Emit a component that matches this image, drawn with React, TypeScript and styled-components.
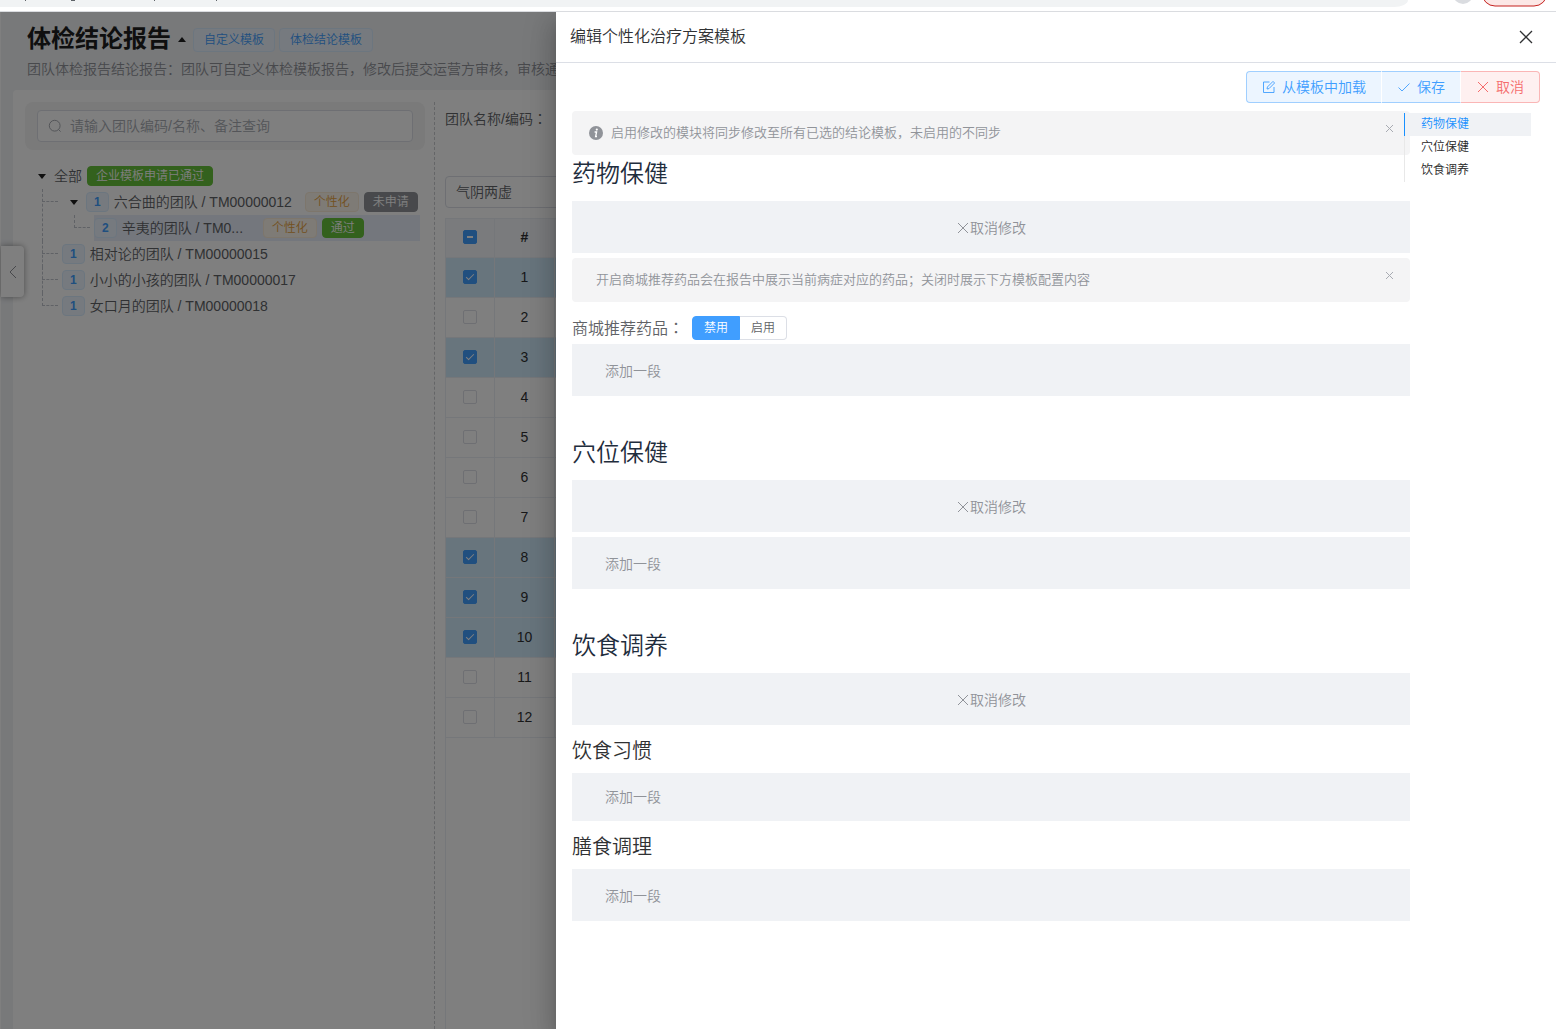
import React, { useState } from "react";
import styled, { createGlobalStyle, css } from "styled-components";

const Global = createGlobalStyle`
  *, *::before, *::after { box-sizing: border-box; }
  body {
    margin: 0;
    background: #fff;
    color: #606266;
    font: 350 14px/20px "Liberation Sans", "Noto Sans CJK SC", sans-serif;
    overflow: hidden;
  }
  button, input, select { font: inherit; color: inherit; margin: 0; }
  h1, h2, h3, p, ul { margin: 0; padding: 0; font-weight: inherit; }
  ul { list-style: none; }
`;

const Screen = styled.div`
  display: flex;
  flex-direction: column;
  height: 100vh;
`;

/* ---------- browser strip ---------- */
const Strip = styled.div`
  flex: none;
  display: flex;
  height: 12px;
  border-bottom: 1px solid #dadce0;
`;
const AddressBar = styled.div`
  flex: 1;
  height: 7px;
  background: #f1f3f4;
  border-bottom-right-radius: 14px 7px;
`;
const Marks = styled.svg`
  display: block;
  width: 240px;
  height: 2px;
  fill: #5f6368;
`;
const StripEnd = styled.svg`
  flex: none;
  width: 148px;
  height: 11px;
`;

/* ---------- page behind the drawer ---------- */
const Stage = styled.div`
  position: relative;
  flex: 1;
  min-height: 0;
  overflow: hidden;
`;
const Page = styled.main`
  display: flex;
  flex-direction: column;
  height: 100%;
  padding-left: 12px;
  border-left: 1px solid #fff;
  background: #f0f2f5;
`;
const PageHead = styled.header`
  padding: 10px 14px 0;
  height: 78px;
  white-space: nowrap;
`;
const TitleRow = styled.div`
  display: flex;
  align-items: center;
  height: 34px;
  gap: 6px;
`;
const PageTitle = styled.h1`
  font-size: 24px;
  line-height: 32px;
  font-weight: 700;
  color: #1f1f1f;
`;
const Caret = styled.svg`
  flex: none;
  width: 10px;
  height: 6px;
  fill: #202020;
`;
const PageNote = styled.p`
  font-size: 14px;
  line-height: 26px;
  color: #909399;
`;
const HeadTags = styled.div`
  display: flex;
  gap: 4px;
  padding-top: 2px;
`;
const Tag = styled.span<{ $kind: "blue" | "green" | "grey" | "orange"; $count?: boolean }>`
  flex: none;
  height: 20px;
  padding: 0 ${(p) => (p.$count ? 7 : 8)}px;
  border: 1px solid;
  border-radius: 4px;
  font-size: 12px;
  line-height: 18px;
  font-weight: ${(p) => (p.$count ? 700 : 350)};
  ${(p) =>
    ({
      blue: css`background: #ecf5ff; border-color: #d9ecff; color: #409eff;`,
      green: css`background: #67c23a; border-color: #67c23a; color: #fff;`,
      grey: css`background: #909399; border-color: #909399; color: #fff;`,
      orange: css`background: #fdf6ec; border-color: #faecd8; color: #e6a23c;`,
    })[p.$kind]}
`;
const HeadTag = styled(Tag)`
  height: 24px;
  padding: 0 10px;
  line-height: 22px;
`;
const Card = styled.div`
  flex: 1;
  min-height: 0;
  display: flex;
  padding: 12px 0 0 12px;
  background: #fff;
  border-top-left-radius: 4px;
`;
const Side = styled.section`
  flex: none;
  width: 410px;
  padding-right: 9px;
  border-right: 1px dashed #c8cace;
`;
const SearchWrap = styled.div`
  padding: 8px 12px;
  border-radius: 8px;
  background: #f5f5f5;
`;
const SearchBox = styled.label`
  display: flex;
  align-items: center;
  gap: 8px;
  height: 32px;
  padding: 0 10px;
  border: 1px solid #dcdfe6;
  border-radius: 4px;
  background: #fff;
  color: #a8abb2;
  input {
    flex: 1;
    min-width: 0;
    border: 0;
    padding: 0;
    outline: 0;
    background: none;
  }
  input::placeholder { color: #a8abb2; opacity: 1; }
`;
const Tree = styled.ul`
  padding: 13px 5px 0 0;
`;
const Children = styled.ul<{ $indent: number }>`
  position: relative;
  padding-left: ${(p) => p.$indent}px;
`;
const Node = styled.li`
  position: relative;
`;
/* dashed connector: a trunk of the given length, with an arm to the row */
const Branch = styled.span<{ $span: number }>`
  position: absolute;
  left: -20px;
  top: 0;
  width: 16px;
  height: 13px;
  border-bottom: 1px dashed #c0c4cc;
  &::before {
    content: "";
    position: absolute;
    left: 0;
    top: 0;
    height: ${(p) => p.$span}px;
    border-left: 1px dashed #c0c4cc;
  }
`;
const NodeRow = styled.div<{ $current?: boolean; $pad?: number }>`
  display: flex;
  align-items: center;
  gap: 5px;
  height: 26px;
  padding-left: ${(p) => p.$pad ?? 0}px;
  background: ${(p) => (p.$current ? "#e8eefa" : "transparent")};
  white-space: nowrap;
`;
const Toggle = styled.button`
  flex: none;
  display: flex;
  align-items: center;
  width: 12px;
  height: 20px;
  padding: 0;
  border: 0;
  background: none;
`;
const NodeName = styled.span<{ $width?: number }>`
  min-width: ${(p) => p.$width ?? 0}px;
`;
const Handle = styled.button`
  position: absolute;
  left: 1px;
  top: 234px;
  display: flex;
  align-items: center;
  justify-content: center;
  width: 23px;
  height: 51px;
  padding: 0;
  border: 0;
  border-radius: 0 4px 4px 0;
  background: #fff;
  color: #909399;
  box-shadow: 0 0 6px rgba(0, 0, 0, 0.4);
`;

const Work = styled.section`
  flex: 1;
  min-width: 0;
  display: flex;
  flex-direction: column;
  padding: 6px 0 0 10px;
`;
const TeamLabel = styled.p`
  height: 68px;
`;
/* full-width colon set in the middle of its box */
const Colon = styled.span`
  font-family: "Noto Sans CJK TC", sans-serif;
`;
const Select = styled.select`
  appearance: none;
  flex: none;
  width: 320px;
  height: 32px;
  margin-bottom: 10px;
  padding: 0 10px;
  border: 1px solid #dcdfe6;
  border-radius: 4px;
  background: #fff;
`;
const TableBox = styled.div`
  flex: 1;
  min-height: 0;
  border-left: 1px solid #ebeef5;
`;
const Table = styled.table`
  width: 100%;
  table-layout: fixed;
  border-collapse: separate;
  border-spacing: 0;
  color: #303133;
  th, td {
    height: 40px;
    padding: 0 0 2px;
    border-right: 1px solid #ebeef5;
    border-bottom: 1px solid #ebeef5;
    text-align: center;
  }
  th { background: #f5f7fa; font-weight: 700; border-top: 1px solid #ebeef5; }
`;
const Col = styled.col<{ $w?: number }>`
  ${(p) => p.$w && `width: ${p.$w}px;`}
`;
const Row = styled.tr<{ $on: boolean }>`
  background: ${(p) => (p.$on ? "#d0ebfb" : "#fff")};
`;
const Check = styled.input<{ $mixed?: boolean }>`
  appearance: none;
  display: block;
  width: 14px;
  height: 14px;
  margin: 0 auto !important;
  border: 1px solid #dcdfe6;
  border-radius: 2px;
  background: #fff;
  &:checked {
    border-color: #409eff;
    background: #409eff;
  }
  &:checked::after {
    content: "";
    display: block;
    ${(p) =>
      p.$mixed
        ? css`width: 6px; height: 2px; margin: 5px 3px; background: #fff;`
        : css`
            width: 4px;
            height: 8px;
            margin: 1px 0 0 4px;
            border: solid #fff;
            border-width: 0 1px 1px 0;
            transform: rotate(45deg);
          `}
  }
`;

/* ---------- drawer ---------- */
const Mask = styled.div`
  position: absolute;
  inset: 0;
  display: flex;
  justify-content: flex-end;
  background: rgba(0, 0, 0, 0.5);
`;
const Drawer = styled.aside`
  display: flex;
  flex-direction: column;
  width: calc(100% - 556px);
  min-width: 640px;
  background: #fff;
  box-shadow: 0 8px 10px -5px rgba(0, 0, 0, 0.2), 0 16px 24px 2px rgba(0, 0, 0, 0.14),
    0 6px 30px 5px rgba(0, 0, 0, 0.12);
`;
const DrawerHead = styled.header`
  display: flex;
  align-items: center;
  justify-content: space-between;
  height: 51px;
  padding: 0 23px 0 14px;
  border-bottom: 1px solid #dcdfe6;
`;
const DrawerTitle = styled.h2`
  font-size: 16px;
  line-height: 24px;
  color: #303133;
`;
const IconButton = styled.button`
  display: flex;
  padding: 0;
  border: 0;
  background: none;
  color: #303133;
`;
const Actions = styled.div`
  display: flex;
  justify-content: flex-end;
  padding: 8px 16px;
`;
const Action = styled.button<{ $danger?: boolean }>`
  display: flex;
  align-items: center;
  gap: 6px;
  height: 32px;
  padding: 0 15px;
  border: 1px solid ${(p) => (p.$danger ? "#fab6b6" : "#a0cfff")};
  background: ${(p) => (p.$danger ? "#fef0f0" : "#ecf5ff")};
  color: ${(p) => (p.$danger ? "#f56c6c" : "#409eff")};
  &:first-child { border-radius: 4px 0 0 4px; border-right-color: #fff; }
  &:nth-child(2) { border-left: 0; border-right-color: #fff; }
  &:last-child { border-radius: 0 4px 4px 0; border-left: 0; }
`;
const DrawerBody = styled.div`
  display: flex;
  padding: 0 25px 0 16px;
`;
const Content = styled.div`
  flex: 1;
  min-width: 0;
`;
const Alert = styled.div<{ $plain?: boolean }>`
  display: flex;
  align-items: center;
  gap: 8px;
  height: 44px;
  padding: 0 14px 0 ${(p) => (p.$plain ? 24 : 17)}px;
  border-radius: 4px;
  background: #f4f4f5;
  color: #909399;
  font-size: 13px;
  button {
    align-self: flex-start;
    margin: 11px 0 0 auto;
    color: #a8abb2;
  }
`;
const SectionTitle = styled.h2`
  padding: 3px 0 11px;
  font-size: 24px;
  line-height: 32px;
  color: #1f2d3d;
`;
const SubTitle = styled.h3`
  padding: 12px 0 8px;
  font-size: 20px;
  line-height: 28px;
  color: #303133;
`;
const Block = styled.button<{ $add?: boolean; $short?: boolean }>`
  display: flex;
  align-items: center;
  justify-content: ${(p) => (p.$add ? "flex-start" : "center")};
  width: 100%;
  height: ${(p) => (p.$short ? 48 : 52)}px;
  padding: ${(p) => (p.$short ? 0 : 2)}px ${(p) => (p.$add ? 33 : 0)}px 0;
  border: 0;
  background: #f0f2f5;
  color: #909399;
`;
const Stack = styled.div`
  display: flex;
  flex-direction: column;
  gap: 5px;
`;
const Section = styled.section`
  & + & { padding-top: 38px; }
`;
const SwitchRow = styled.fieldset`
  display: flex;
  align-items: center;
  height: 24px;
  margin: 9px 0 4px;
  padding: 0;
  border: 0;
  font-size: 16px;
  gap: 8px;
`;
const SwitchGroup = styled.div`
  display: flex;
`;
const SwitchOption = styled.label`
  display: flex;
  align-items: center;
  height: 24px;
  padding: 0 11px;
  border: 1px solid #dcdfe6;
  font-size: 12px;
  line-height: 22px;
  &:first-child { border-radius: 4px 0 0 4px; }
  &:last-child { border-radius: 0 4px 4px 0; border-left: 0; }
  &:has(input:checked) { background: #409eff; border-color: #409eff; color: #fff; }
  input { appearance: none; width: 0; height: 0; }
`;
const Anchors = styled.nav`
  position: relative;
  flex: none;
  display: flex;
  flex-direction: column;
  width: 127px;
  height: 69px;
  margin: 2px 0 0 -6px;
`;
const Anchor = styled.a<{ $on?: boolean }>`
  height: 23px;
  padding-left: 16px;
  border-left: 1px solid ${(p) => (p.$on ? "#1890ff" : "#e8e8e8")};
  background: ${(p) => (p.$on ? "#f0f2f5" : "transparent")};
  color: ${(p) => (p.$on ? "#1890ff" : "#262626")};
  font-size: 12px;
  line-height: 23px;
  text-decoration: none;
`;

/* a cross drawn inside a square box, with a margin round it */
const Cross = ({ size, inset = 2, weight = 1 }: { size: number; inset?: number; weight?: number }) => {
  const far = size - inset;
  return (
    <svg width={size} height={size} viewBox={`0 0 ${size} ${size}`} fill="none" stroke="currentColor" strokeWidth={weight}>
      <path d={`M${inset} ${inset} ${far} ${far}M${far} ${inset} ${inset} ${far}`} />
    </svg>
  );
};
const SearchIcon = () => (
  <svg width="14" height="14" viewBox="0 0 14 14" fill="none" stroke="currentColor">
    <circle cx="6.7" cy="6.7" r="5.4" />
    <path d="m10.6 10.6 2 2" />
  </svg>
);
const EditIcon = () => (
  <svg width="14" height="14" viewBox="0 0 14 14" fill="none" stroke="currentColor" strokeWidth="0.9">
    <path d="M7.500 2H1.500v10.500H12V7" />
    <path d="m5 9 .4-2L11 1.400 12.600 3 7 8.600z" />
  </svg>
);
const TickIcon = () => (
  <svg width="14" height="14" viewBox="0 0 14 14" fill="none" stroke="currentColor" strokeWidth="0.9">
    <path d="m1.500 7.500 3.500 3.500 7.500-7.500" />
  </svg>
);
const InfoIcon = () => (
  <svg width="14" height="14" viewBox="0 0 14 14">
    <circle cx="7" cy="7" r="7" fill="#909399" />
    <circle cx="7.800" cy="3.600" r="1.100" fill="#fff" />
    <path d="M5.600 6h2l-1 4.500h1.400" fill="none" stroke="#fff" strokeWidth="1.300" />
  </svg>
);
const Down = () => (
  <Caret viewBox="0 0 10 6"><path d="M1 1h8L5 6z" /></Caret>
);

const LEAVES = [
  { name: "相对论的团队 / TM00000015" },
  { name: "小小的小孩的团队 / TM00000017" },
  { name: "女口月的团队 / TM00000018" },
];

function PageBehind() {
  const [picked, setPicked] = useState<number[]>([1, 3, 8, 9, 10]);
  const flip = (n: number) =>
    setPicked((p) => (p.includes(n) ? p.filter((x) => x !== n) : [...p, n]));
  return (
    <Page>
      <PageHead>
        <TitleRow>
          <PageTitle>体检结论报告</PageTitle>
          <Caret viewBox="0 0 10 6"><path d="M1 6h8L5 1z" /></Caret>
          <HeadTags>
            <HeadTag $kind="blue">自定义模板</HeadTag>
            <HeadTag $kind="blue">体检结论模板</HeadTag>
          </HeadTags>
        </TitleRow>
        <PageNote>团队体检报告结论报告：团队可自定义体检模板报告，修改后提交运营方审核，审核通过后生效</PageNote>
      </PageHead>
      <Card>
        <Side>
          <SearchWrap>
            <SearchBox>
              <SearchIcon />
              <input aria-label="团队查询" placeholder="请输入团队编码/名称、备注查询" />
            </SearchBox>
          </SearchWrap>
          <Tree>
            <Node>
              <NodeRow $pad={12}>
                <Toggle aria-label="收起"><Down /></Toggle>
                <NodeName>全部</NodeName>
                <Tag $kind="green">企业模板申请已通过</Tag>
              </NodeRow>
              <Children $indent={37}>
                <Node>
                  <Branch $span={52} />
                  <NodeRow $pad={7}>
                    <Toggle aria-label="收起"><Down /></Toggle>
                    <Tag $kind="blue" $count>1</Tag>
                    <NodeName $width={186}>六合曲的团队 / TM00000012</NodeName>
                    <Tag $kind="orange">个性化</Tag>
                    <Tag $kind="grey">未申请</Tag>
                  </NodeRow>
                  <Children $indent={32}>
                    <Node>
                      <Branch $span={13} />
                      <NodeRow $current>
                        <Tag $kind="blue" $count>2</Tag>
                        <NodeName $width={136}>辛夷的团队 / TM0...</NodeName>
                        <Tag $kind="orange">个性化</Tag>
                        <Tag $kind="green">通过</Tag>
                      </NodeRow>
                    </Node>
                  </Children>
                </Node>
                {LEAVES.map((leaf, i) => (
                  <Node key={leaf.name}>
                    <Branch $span={i === LEAVES.length - 1 ? 13 : 26} />
                    <NodeRow>
                      <Tag $kind="blue" $count>1</Tag>
                      <NodeName>{leaf.name}</NodeName>
                    </NodeRow>
                  </Node>
                ))}
              </Children>
            </Node>
          </Tree>
        </Side>
        <Work>
          <TeamLabel>团队名称/编码<Colon>：</Colon></TeamLabel>
          <Select aria-label="证型"><option>气阴两虚</option></Select>
          <TableBox>
            <Table>
              <colgroup><Col $w={49} /><Col $w={60} /><Col /></colgroup>
              <thead>
                <tr>
                  <th><Check type="checkbox" aria-label="全选" $mixed defaultChecked /></th>
                  <th>#</th>
                  <th />
                </tr>
              </thead>
              <tbody>
                {Array.from({ length: 12 }, (_, i) => i + 1).map((n) => (
                  <Row key={n} $on={picked.includes(n)}>
                    <td>
                      <Check type="checkbox" aria-label={`第${n}行`} checked={picked.includes(n)} onChange={() => flip(n)} />
                    </td>
                    <td>{n}</td>
                    <td />
                  </Row>
                ))}
              </tbody>
            </Table>
          </TableBox>
        </Work>
      </Card>
      <Handle aria-label="收起侧栏">
        <svg width="8" height="14" viewBox="0 0 8 14" fill="none" stroke="currentColor"><path d="M7 1 1 7l6 6" /></svg>
      </Handle>
    </Page>
  );
}

const CancelBlock = () => (
  <Block><Cross size={14} />取消修改</Block>
);
const AddBlock = ({ short }: { short?: boolean }) => (
  <Block $add $short={short}>添加一段</Block>
);

export default function App() {
  return (
    <Screen>
      <Global />
      <Strip>
        <AddressBar>
          <Marks viewBox="0 0 240 2">
            <path d="M25 0h1v1h-1zM71 0h4v1h-4zM154 0h1v1h-1zM216 0h1v1h-1z" />
          </Marks>
        </AddressBar>
        <StripEnd viewBox="0 0 148 11">
          <circle cx="55" cy="-6" r="10" fill="#dadce0" />
          <rect x="74" y="-20" width="65" height="26" rx="13" fill="#fce8e6" stroke="#c5221f" />
        </StripEnd>
      </Strip>
      <Stage>
        <PageBehind />
        <Mask>
          <Drawer>
            <DrawerHead>
              <DrawerTitle>编辑个性化治疗方案模板</DrawerTitle>
              <IconButton aria-label="关闭"><Cross size={14} inset={1} weight={1.300} /></IconButton>
            </DrawerHead>
            <Actions>
              <Action><EditIcon />从模板中加载</Action>
              <Action><TickIcon />保存</Action>
              <Action $danger><Cross size={14} />取消</Action>
            </Actions>
            <DrawerBody>
              <Content>
                <Alert>
                  <InfoIcon />启用修改的模块将同步修改至所有已选的结论模板，未启用的不同步
                  <IconButton aria-label="关闭提示"><Cross size={13} inset={3} /></IconButton>
                </Alert>
                <Section id="drug">
                  <SectionTitle>药物保健</SectionTitle>
                  <Stack>
                    <CancelBlock />
                    <Alert $plain>
                      开启商城推荐药品会在报告中展示当前病症对应的药品；关闭时展示下方模板配置内容
                      <IconButton aria-label="关闭提示"><Cross size={13} inset={3} /></IconButton>
                    </Alert>
                    <SwitchRow>
                      <span>商城推荐药品<Colon>：</Colon></span>
                      <SwitchGroup>
                        <SwitchOption><input type="radio" name="mall" defaultChecked />禁用</SwitchOption>
                        <SwitchOption><input type="radio" name="mall" />启用</SwitchOption>
                      </SwitchGroup>
                    </SwitchRow>
                  </Stack>
                  <AddBlock />
                </Section>
                <Section id="point">
                  <SectionTitle>穴位保健</SectionTitle>
                  <Stack>
                    <CancelBlock />
                    <AddBlock />
                  </Stack>
                </Section>
                <Section id="diet">
                  <SectionTitle>饮食调养</SectionTitle>
                  <CancelBlock />
                  <SubTitle>饮食习惯</SubTitle>
                  <AddBlock short />
                  <SubTitle>膳食调理</SubTitle>
                  <AddBlock />
                </Section>
              </Content>
              <Anchors>
                <Anchor href="#drug" $on>药物保健</Anchor>
                <Anchor href="#point">穴位保健</Anchor>
                <Anchor href="#diet">饮食调养</Anchor>
              </Anchors>
            </DrawerBody>
          </Drawer>
        </Mask>
      </Stage>
    </Screen>
  );
}
